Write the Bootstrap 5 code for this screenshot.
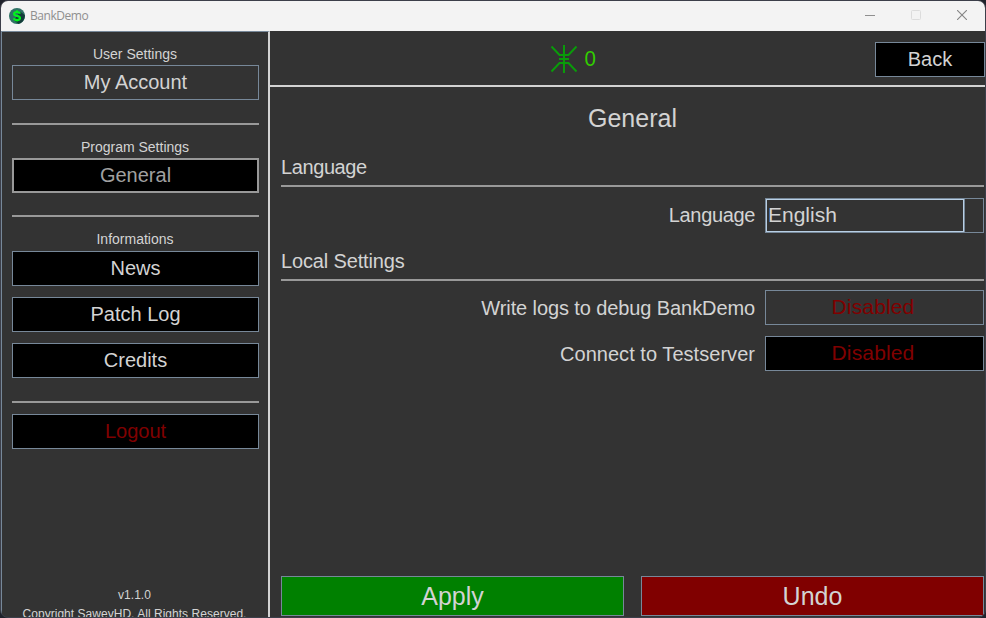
<!DOCTYPE html>
<html lang="en">
<head>
<meta charset="utf-8">
<meta name="viewport" content="width=device-width, initial-scale=1">
<title>BankDemo</title>
<link href="https://cdn.jsdelivr.net/npm/bootstrap@5.3.0/dist/css/bootstrap.min.css" rel="stylesheet">
<style>
  body { background: #1f222b; font-family: "Liberation Sans", Arial, sans-serif; color: #d3d3d3; font-size: 20px; line-height: 35px; }
  .app-window { width: 986px; height: 618px; border: 1px solid #3c3f4a; border-radius: 8px; background: #333; }
  .title-strip { height: 30px; background: #f3f3f3; padding-left: 8px; font: 12px/30px "Open Sans", sans-serif; color: #8f8f8f; }
  .title-strip .app-name { margin-left: 5px; letter-spacing: -.45px; }
  .win-controls { gap: 36px; padding: 0 18px 2px 0; }
  .side { width: 269px; padding: 14px 9px 0 10px; border-right: 2px solid #d3d3d3; border-left: 1px solid #778899; border-top: 1px solid #778899; }
  .side-label { font-size: 14px; line-height: 18px; height: 19px; padding-right: 1px; }
  .side-label-first { line-height: 16px; }
  .side-label-program { height: 20px; }
  .side-label-info { height: 21px; }
  .box-btn { --bs-btn-font-size: 20px; --bs-btn-line-height: 33px; --bs-btn-padding-y: 0; --bs-btn-padding-x: 0; --bs-btn-border-radius: 0;
    --bs-btn-color: #d3d3d3; --bs-btn-bg: #000; --bs-btn-border-color: #778899; --bs-btn-hover-color: #fff; --bs-btn-hover-bg: #333; --bs-btn-hover-border-color: #778899; height: 35px; }
  .box-clear { --bs-btn-bg: #333; }
  .box-current { --bs-btn-color: #a0a0a0; --bs-btn-border-color: #999; --bs-btn-border-width: 2px; --bs-btn-line-height: 31px; }
  .box-red { --bs-btn-color: #800000; }
  .box-gap { margin-bottom: 11px; }
  .rule { height: 2px; background: #999; flex-shrink: 0; }
  .side .rule { margin: 23px 0 13px; }
  .side .rule-mid { margin-top: 22px; }
  .side .rule-tight { margin-bottom: 11px; }
  .foot-note { font-size: 12px; line-height: 19px; height: 31px; letter-spacing: .03px; padding-right: 2px; }
  .top-strip { height: 56px; border-bottom: 2px solid #d3d3d3; padding-top: 3px; }
  .back-btn { width: 110px; }
  .credits-count { color: #32cd00; gap: 7px; font-size: 22px; padding: 0 0 2px 2px; }
  .credits-count span { transform: scaleX(.93); }
  .page-body { padding: 0 1px 1px 11px; }
  .page-title { font-size: 25px; line-height: 30px; padding-top: 16px; height: 63px; }
  .group-name { height: 35px; letter-spacing: -.15px; }
  .group-language { letter-spacing: -.4px; }
  .setting { gap: 10px; height: 35px; margin-bottom: 11px; }
  .setting-language { margin-top: 11px; }
  .setting-first { margin-top: 9px; }
  .setting label { letter-spacing: -.1px; line-height: 36px; }
  .setting-language label { letter-spacing: -.35px; line-height: 35px; }
  .setting-test label { letter-spacing: .04px; }
  .field { width: 219px; }
  .field.btn { --bs-btn-font-size: 21px; --bs-btn-line-height: 31px; padding: 0 3px 2px 0; letter-spacing: .15px; }
  .picker { height: 35px; border: 1px solid #778899; line-height: 30px; font-size: 21px; }
  .picker-value { width: 198px; border: 1px solid #b8cfe5; box-shadow: 1px 0 #778899; padding-left: 1px; }
  .action-row { gap: 17px; }
  .action { --bs-btn-font-size: 25px; --bs-btn-line-height: 36px; height: 40px; flex: 1 1 0; padding-bottom: 1px; }
  .action-apply { --bs-btn-bg: #008000; --bs-btn-hover-bg: #009000; }
  .action-undo { --bs-btn-bg: #800000; --bs-btn-hover-bg: #900000; }
</style>
</head>
<body class="overflow-hidden">
<div class="app-window d-flex flex-column overflow-hidden">
  <header class="title-strip d-flex align-items-center flex-shrink-0">
    <svg width="16" height="16" viewBox="0 0 16 16"><circle cx="8" cy="8" r="8" fill="#2f7365"/><path d="M11 3.500l4.800 3.500a8 8 0 0 1-6.500 8.900L5 12z" fill="#143c3a"/><path d="M11 5.700C10.600 4.500 9.500 4 8 4 6.400 4 5.100 4.600 5.100 5.900 5.100 8.600 11 7.100 11 10 11 11.400 9.700 12 8.100 12 6.500 12 5.300 11.500 4.900 10.200" fill="none" stroke="#00f51b" stroke-width="2.200"/><path d="M8 2.300v2M8 11.500v2" stroke="#00f51b" stroke-width="1.600"/></svg>
    <span class="app-name">BankDemo</span>
    <div class="win-controls d-flex align-items-center ms-auto">
      <svg width="10" height="10" viewBox="0 0 10 10"><path d="M0 5.500h10" stroke="#8f8f8f"/></svg>
      <svg width="10" height="10" viewBox="0 0 10 10"><rect x=".5" y=".5" width="9" height="9" rx="1" fill="none" stroke="#dcdcdc"/></svg>
      <svg width="10" height="10" viewBox="0 0 10 10"><path d="M0 0l10 10M10 0L0 10" stroke="#858585" stroke-width="1.100"/></svg>
    </div>
  </header>
  <div class="d-flex flex-grow-1 overflow-hidden">
    <nav class="side d-flex flex-column flex-shrink-0 text-center">
      <div class="side-label side-label-first">User Settings</div>
      <button class="btn box-btn box-clear">My Account</button>
      <div class="rule"></div>
      <div class="side-label side-label-program">Program Settings</div>
      <button class="btn box-btn box-current">General</button>
      <div class="rule rule-mid"></div>
      <div class="side-label side-label-info">Informations</div>
      <button class="btn box-btn box-gap">News</button>
      <button class="btn box-btn box-gap">Patch Log</button>
      <button class="btn box-btn">Credits</button>
      <div class="rule rule-tight"></div>
      <button class="btn box-btn box-red">Logout</button>
      <div class="foot-note mt-auto text-nowrap">v1.1.0<br>Copyright SaweyHD. All Rights Reserved.</div>
    </nav>
    <main class="d-flex flex-column flex-grow-1">
      <div class="top-strip d-flex align-items-center flex-shrink-0">
        <div class="credits-count d-flex align-items-center justify-content-center flex-grow-1">
          <svg width="26" height="28" viewBox="0 0 26 28" fill="none" stroke="#0a9b0a" stroke-width="2"><path d="M13 0v28M.5 1.500l8 8.500h9l8-8.500M.5 26.500l8-8.500h9l8 8.500M8 14h10"/></svg>
          <span>0</span>
        </div>
        <button class="btn box-btn back-btn">Back</button>
      </div>
      <div class="page-body d-flex flex-column flex-grow-1">
        <h1 class="page-title text-center fw-normal m-0">General</h1>
        <div class="group-name group-language">Language</div>
        <div class="rule"></div>
        <div class="setting setting-language d-flex justify-content-end">
          <label>Language</label>
          <div class="field picker d-flex"><div class="picker-value">English</div></div>
        </div>
        <div class="group-name">Local Settings</div>
        <div class="rule"></div>
        <div class="setting setting-first d-flex justify-content-end">
          <label>Write logs to debug BankDemo</label>
          <button class="btn box-btn box-clear box-red field">Disabled</button>
        </div>
        <div class="setting setting-test d-flex justify-content-end">
          <label>Connect to Testserver</label>
          <button class="btn box-btn box-red field">Disabled</button>
        </div>
        <div class="d-flex mt-auto action-row">
          <button class="btn box-btn action action-apply">Apply</button>
          <button class="btn box-btn action action-undo">Undo</button>
        </div>
      </div>
    </main>
  </div>
</div>
<script src="https://cdn.jsdelivr.net/npm/bootstrap@5.3.0/dist/js/bootstrap.bundle.min.js"></script>
</body>
</html>
